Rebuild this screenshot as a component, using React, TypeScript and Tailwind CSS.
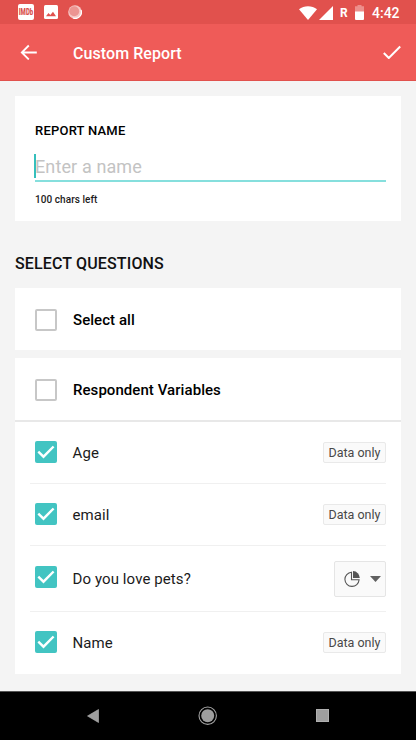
import { useState } from 'react';
import clsx from 'clsx';

type Question = {
  id: string;
  label: string;
  kind: 'data' | 'chart';
  rowClass: string;
  labelClass: string;
};

const questions: Question[] = [
  { id: 'age', label: 'Age', kind: 'data', rowClass: 'h-[61px] pb-px', labelClass: 'pt-0.5' },
  { id: 'email', label: 'email', kind: 'data', rowClass: 'h-[62px] border-t pb-px', labelClass: 'pt-0.5' },
  { id: 'pets', label: 'Do you love pets?', kind: 'chart', rowClass: 'h-[66px] border-t pb-[3px]', labelClass: 'pt-[5px]' },
  { id: 'name', label: 'Name', kind: 'data', rowClass: 'h-[63px] border-t pb-0.5', labelClass: 'pt-0.5' },
];

const StatusBar = () => (
  <div className="flex h-6 items-center justify-between bg-[#e1514d] pl-[18px] pr-4 text-white">
    <div className="flex items-center">
      <div className="flex h-4 w-4 items-center justify-center rounded-[2px] bg-white">
        <svg className="overflow-visible" width="16" height="16" viewBox="0 0 16 16">
          <text
            x="0.8"
            y="11.2"
            textLength="14.4"
            lengthAdjust="spacingAndGlyphs"
            className="fill-[#d9504d] font-['Roboto'] text-[9px] font-black"
          >
            IMDb
          </text>
        </svg>
      </div>
      <svg className="ml-[10px]" width="14" height="14" viewBox="0 0 14 14">
        <rect width="14" height="14" rx="1.5" fill="#fff" />
        <path d="M2 11.3 4.5 8l1.8 2L9 6.8l3 4.5z" fill="#e1514d" />
      </svg>
      <svg className="ml-[10px]" width="14" height="14" viewBox="0 0 14 14">
        <circle cx="7" cy="7" r="6.8" fill="#f6c9c7" />
        <circle cx="6.2" cy="6.2" r="5" fill="#ec9592" />
        <path d="M13 5a6.2 6.2 0 0 1-8 8" fill="none" stroke="#fff" strokeWidth="1.2" />
      </svg>
    </div>
    <div className="flex items-center pt-px">
      <svg width="18" height="14" viewBox="0 0 18 14">
        <path d="M0 3.2C5-.9 13-.9 18 3.2L9 14z" fill="#fff" />
      </svg>
      <svg className="ml-[2px]" width="14" height="14" viewBox="0 0 14 14">
        <path d="M14 0v14H0z" fill="#fff" />
      </svg>
      <span className="ml-[7px] w-[7px] text-[12px] font-bold leading-none">R</span>
      <svg className="ml-[8px]" width="9" height="15" viewBox="0 0 9 15">
        <path d="M2.5 0h4v1.3H9V7H0V1.3h2.5z" fill="#ed8f8c" />
        <path d="M0 6.5h9V14a1 1 0 0 1-1 1H1a1 1 0 0 1-1-1z" fill="#fff" />
      </svg>
      <span className="ml-2 w-7 whitespace-nowrap text-[14px] font-medium leading-none">4:42</span>
    </div>
  </div>
);

const Header = () => (
  <header className="flex h-[57px] items-center border-b border-[#e1514d] bg-[#ef5b58] pl-5 pr-[15px] text-white">
    <svg width="18" height="16" viewBox="0 0 18 16" fill="none" stroke="#fff" strokeWidth="1.8">
      <path d="M16.8 8.5H1.8M8.8 1.5l-7 7 7 7" />
    </svg>
    <h1 className="ml-[35px] flex-1 pt-[3px] text-[16px] font-medium tracking-[0.07px]">Custom Report</h1>
    <svg width="18" height="14" viewBox="0 0 18 14" fill="none" stroke="#fff" strokeWidth="2">
      <path d="m.8 8 5 5L17.2 1.5" />
    </svg>
  </header>
);

const Checkbox = ({ checked, onChange, label }: { checked: boolean; onChange: () => void; label: string }) => (
  <button
    role="checkbox"
    aria-checked={checked}
    aria-label={label}
    onClick={onChange}
    className={clsx(
      'flex h-[22px] w-[22px] shrink-0 items-center justify-center rounded-[2px]',
      checked ? 'bg-[#42c4c2]' : 'border-2 border-[#c7c7c7] bg-white'
    )}
  >
    {checked && (
      <svg width="22" height="22" viewBox="0 0 22 22" fill="none" stroke="#fff" strokeWidth="2.4">
        <path d="m3.3 10.7 5.2 5L18.6 5.5" />
      </svg>
    )}
  </button>
);

const DataBadge = () => (
  <span className="mt-px flex h-[21px] w-[63px] items-center justify-center whitespace-nowrap rounded-[2px] border border-[#e9e9e9] bg-[#fafafa] pt-px text-[12.5px] text-[#484848]">
    Data only
  </span>
);

const ChartPicker = () => (
  <button className="mt-1 flex h-9 w-[52px] items-center rounded-[2px] border border-[#e5e5e5] bg-[#fafafa] pl-[9px]">
    <svg width="16" height="16" viewBox="0 0 16 16">
      <path d="M7.5 1.2a7.1 7.1 0 1 0 7.6 7.6H7.5z" fill="none" stroke="#555" strokeWidth="1.1" />
      <path d="M9 .1A7 7 0 0 1 15.8 7H9z" fill="#555" />
    </svg>
    <svg className="ml-[10px]" width="11" height="6" viewBox="0 0 11 6">
      <path d="M0 0h11L5.5 6z" fill="#616161" />
    </svg>
  </button>
);

const NavigationBar = () => (
  <nav className="flex h-[49px] items-center border-t border-[#555] bg-black pl-[87px]">
    <svg width="12" height="14" viewBox="0 0 12 14">
      <path d="M11.5.5v13L.5 7z" fill="#9e9e9e" stroke="#b5b5b5" strokeWidth=".6" />
    </svg>
    <svg className="ml-[99px]" width="20" height="20" viewBox="0 0 20 20">
      <circle cx="9.7" cy="9.7" r="8.7" fill="none" stroke="#a3a3a3" strokeWidth="1.1" />
      <circle cx="9.7" cy="9.7" r="6.5" fill="#9e9e9e" />
    </svg>
    <div className="mb-px ml-[98px] h-[13px] w-[13px] border border-[#b0b0b0] bg-[#9e9e9e]" />
  </nav>
);

export default function App() {
  const [selected, setSelected] = useState<string[]>(questions.map((q) => q.id));
  const [selectAll, setSelectAll] = useState(false);
  const [respondent, setRespondent] = useState(false);
  const [name, setName] = useState('');

  const toggle = (id: string) => {
    setSelected((prev) => (prev.includes(id) ? prev.filter((x) => x !== id) : [...prev, id]));
  };

  return (
    <div className="flex h-[740px] w-[416px] flex-col overflow-hidden bg-[#f4f4f4] font-['Roboto',sans-serif] text-[#1b1b1b]">
      <StatusBar />
      <Header />

      <main className="flex-1 px-[15px] pt-[15px]">
        {/* Report name */}
        <section className="h-[125px] bg-white pl-5 pr-[15px] pt-[27px]">
          <h2 className="text-[13px] font-medium leading-4 tracking-[0.22px] text-black">REPORT NAME</h2>
          <div className="mt-[15px] flex h-7 items-start border-b-2 border-[#86dfdd]">
            <div className="-ml-px h-6 w-[2px] bg-[#35bfbc]" />
            <input
              value={name}
              maxLength={100}
              onChange={(e) => setName(e.target.value)}
              placeholder="Enter a name"
              className="-ml-px h-[25px] flex-1 text-[18px] tracking-[0.12px] placeholder:text-[#c3c3c3] focus:outline-none"
            />
          </div>
          <p className="mt-[11px] text-[10px] font-medium leading-[14px] tracking-[0.06px]">{100 - name.length} chars left</p>
        </section>

        <h2 className="mt-[33px] text-[16px] font-medium leading-5 tracking-[0.15px] text-[#111]">SELECT QUESTIONS</h2>

        <section className="mt-[14px] flex h-[62px] items-center bg-white pl-5 pt-0.5">
          <Checkbox label="Select all" checked={selectAll} onChange={() => setSelectAll(!selectAll)} />
          <span className="ml-4 text-[15px] font-medium tracking-[0.06px] text-black">Select all</span>
        </section>

        {/* Questions */}
        <section className="mt-2 bg-white">
          <div className="flex h-[64px] items-center border-b-2 border-[#e8e8e8] pl-5 pt-0.5">
            <Checkbox
              label="Respondent Variables"
              checked={respondent}
              onChange={() => setRespondent(!respondent)}
            />
            <span className="ml-4 text-[15px] font-medium tracking-[0.06px] text-black">Respondent Variables</span>
          </div>
          <div className="px-[15px]">
            {questions.map((q) => (
              <div key={q.id} className={clsx('flex items-center border-[#f0f0f0] pl-[5px]', q.rowClass)}>
                <Checkbox label={q.label} checked={selected.includes(q.id)} onChange={() => toggle(q.id)} />
                <span className={clsx('ml-[15.5px] flex-1 text-[15px] tracking-[0.1px]', q.labelClass)}>{q.label}</span>
                {q.kind === 'chart' ? <ChartPicker /> : <DataBadge />}
              </div>
            ))}
          </div>
        </section>
      </main>

      <NavigationBar />
    </div>
  );
}
